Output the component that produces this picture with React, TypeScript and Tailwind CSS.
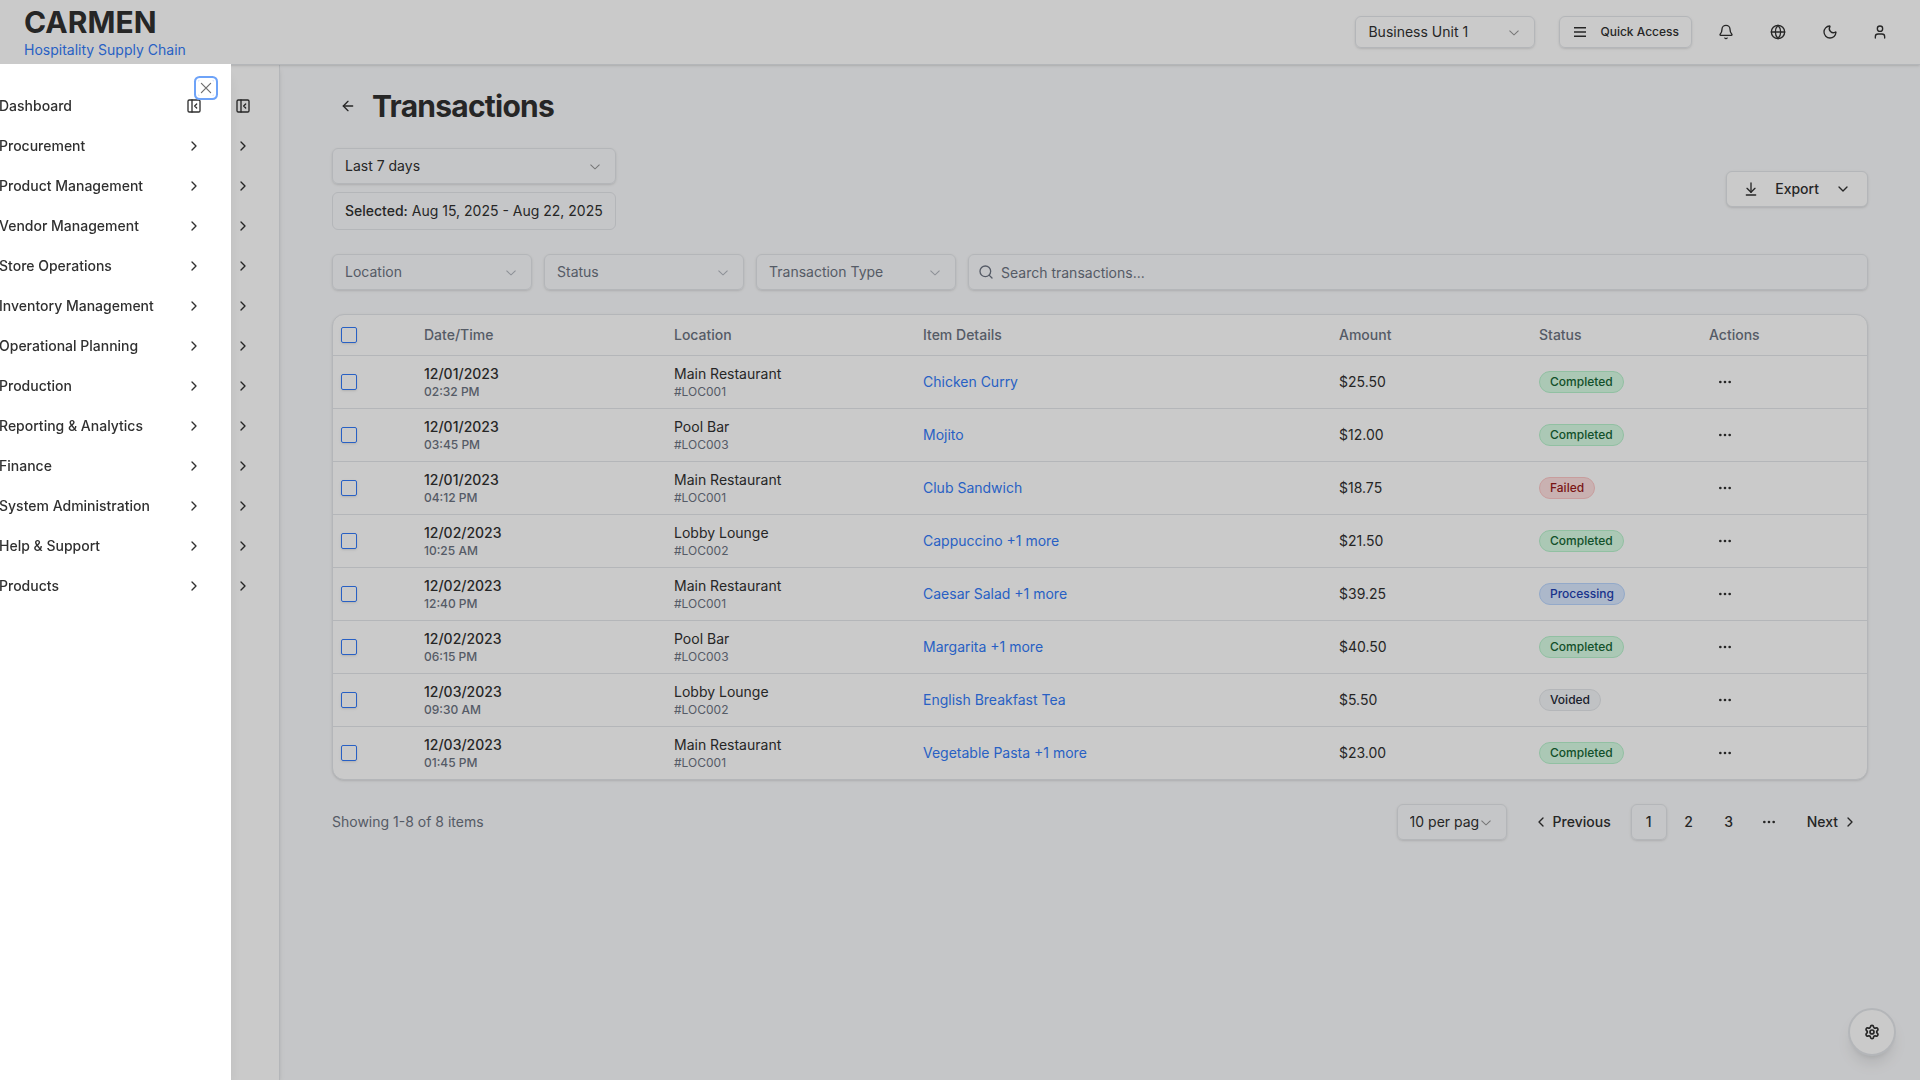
import React from "react";
import {
  ArrowLeft,
  ArrowDownToLine,
  Bell,
  ChevronDown,
  ChevronLeft,
  ChevronRight,
  Ellipsis,
  Globe,
  Moon,
  PanelLeftClose,
  Search,
  Settings,
  User,
} from "lucide-react";

const menu = [
  "Dashboard",
  "Procurement",
  "Product Management",
  "Vendor Management",
  "Store Operations",
  "Inventory Management",
  "Operational Planning",
  "Production",
  "Reporting & Analytics",
  "Finance",
  "System Administration",
  "Help & Support",
  "Products",
];

type Status = "Completed" | "Failed" | "Processing" | "Voided";

const badgeColors: Record<Status, string> = {
  Completed: "bg-[#d6fae3] border-[#b6f0cb] text-[#166534]",
  Failed: "bg-[#fcdede] border-[#fac5c5] text-[#991b1b]",
  Processing: "bg-[#d7e6fd] border-[#b8d4fc] text-[#1e40af]",
  Voided: "bg-[#f1f3f5] border-[#e1e4e8] text-[#1f2937]",
};

const rows: [string, string, string, string, string, string, Status][] = [
  ["12/01/2023", "02:32 PM", "Main Restaurant", "#LOC001", "Chicken Curry", "$25.50", "Completed"],
  ["12/01/2023", "03:45 PM", "Pool Bar", "#LOC003", "Mojito", "$12.00", "Completed"],
  ["12/01/2023", "04:12 PM", "Main Restaurant", "#LOC001", "Club Sandwich", "$18.75", "Failed"],
  ["12/02/2023", "10:25 AM", "Lobby Lounge", "#LOC002", "Cappuccino +1 more", "$21.50", "Completed"],
  ["12/02/2023", "12:40 PM", "Main Restaurant", "#LOC001", "Caesar Salad +1 more", "$39.25", "Processing"],
  ["12/02/2023", "06:15 PM", "Pool Bar", "#LOC003", "Margarita +1 more", "$40.50", "Completed"],
  ["12/03/2023", "09:30 AM", "Lobby Lounge", "#LOC002", "English Breakfast Tea", "$5.50", "Voided"],
  ["12/03/2023", "01:45 PM", "Main Restaurant", "#LOC001", "Vegetable Pasta +1 more", "$23.00", "Completed"],
];

function ThinChevron() {
  return (
    <svg viewBox="0 0 15 15" fill="currentColor" className="pointer-events-none absolute top-1/2 right-[13px] size-4 -translate-y-1/2 opacity-50" aria-hidden="true">
      <path d="M3.13523 6.15803C3.3241 5.95657 3.64052 5.94637 3.84197 6.13523L7.5 9.56464L11.158 6.13523C11.3595 5.94637 11.6759 5.95657 11.8648 6.15803C12.0536 6.35949 12.0434 6.67591 11.842 6.86477L7.84197 10.6148C7.64964 10.7951 7.35036 10.7951 7.15803 10.6148L3.15803 6.86477C2.95657 6.67591 2.94637 6.35949 3.13523 6.15803Z" />
    </svg>
  );
}

function Select({ label, value, className, height = "h-9" }: { label: string; value: string; className: string; height?: string }) {
  return (
    <div className={`relative ${className}`}>
      <select
        aria-label={label}
        className={`block w-full ${height} appearance-none rounded-md border border-[#e1e4e8] bg-transparent pl-3 pr-3 text-sm shadow-sm`}
      >
        <option>{value}</option>
      </select>
      <ThinChevron />
    </div>
  );
}

function Check({ label }: { label: string }) {
  return (
    <input
      type="checkbox"
      aria-label={label}
      className="block size-4 appearance-none rounded-xs border border-[#3279f6] shadow-sm checked:bg-[#3279f6]"
    />
  );
}

function MenuRow({ label, showLabel }: { label: string; showLabel: boolean }) {
  const Icon = label === "Dashboard" ? PanelLeftClose : ChevronRight;
  return (
    <li>
      <button
        aria-label={label}
        className={`flex h-10 w-full items-center text-left text-sm font-medium ${showLabel ? "justify-between" : "justify-end"}`}
      >
        {showLabel && <span>{label}</span>}
        <Icon className="size-4" />
      </button>
    </li>
  );
}

export default function App() {
  return (
    <div className="flex min-h-screen flex-col bg-[#f7f8fa] font-['Inter',sans-serif] text-[#303030] antialiased">
      <header className="relative z-10 box-content flex h-16 items-center justify-between border-b border-[#e1e4e8] bg-[#fdfdfd] pl-6 pr-6 shadow-sm">
        <div>
          <div className="text-3xl font-bold">CARMEN</div>
          <div className="text-sm text-[#3279f6]">Hospitality Supply Chain</div>
        </div>
        <div className="flex items-center">
          <Select label="Business unit" value="Business Unit 1" className="w-[180px]" height="h-8" />
          <button className="ml-6 flex h-8 items-center rounded-md border border-[#e1e4e8] px-3 text-xs font-medium shadow-sm">
            <svg viewBox="0 0 16 16" fill="currentColor" className="mr-3 size-4" aria-hidden="true">
              <path d="M2 3h12v1.4H2zM2 7.3h12v1.4H2zM2 11.6h12V13H2z" />
            </svg>
            Quick Access
          </button>
          <button aria-label="Notifications" className="ml-4 flex size-9 items-center justify-center"><Bell className="size-4" /></button>
          <button aria-label="Language" className="ml-4 flex size-9 items-center justify-center"><Globe className="size-4" /></button>
          <button aria-label="Theme" className="ml-4 flex size-9 items-center justify-center"><Moon className="size-4" /></button>
          <button aria-label="Account" className="ml-4 flex size-8 items-center justify-center"><User className="size-4" /></button>
        </div>
      </header>

      <div className="flex flex-1">
        <aside className="w-[280px] shrink-0 border-r border-[#e1e4e8] bg-[#fdfdfd] pr-7 pt-[21px] shadow-md">
          <ul>
            {menu.map((m) => (
              <MenuRow key={m} label={m} showLabel={false} />
            ))}
          </ul>
        </aside>

        <main className="min-w-0 flex-1 px-[52px] pt-[23px]">
          <div className="flex items-center">
            <button aria-label="Back" className="flex size-8 items-center justify-center"><ArrowLeft className="size-4" /></button>
            <h1 className="ml-2 text-3xl font-bold tracking-tight">Transactions</h1>
          </div>

          <div className="mt-6 flex items-center justify-between">
            <div className="flex flex-col gap-2">
              <Select label="Date range" value="Last 7 days" className="w-full" />
              <div className="rounded-md border border-[#e1e4e8] px-3 py-2 text-sm">
                <span className="font-medium">Selected:</span> Aug 15, 2025 - Aug 22, 2025
              </div>
            </div>
            <button className="flex h-9 items-center gap-4 rounded-md border border-[#e1e4e8] bg-[#fdfdfd] px-4 text-sm font-medium shadow-sm">
              <ArrowDownToLine className="size-4" />
              Export
              <ChevronDown className="size-4" />
            </button>
          </div>

          <div className="mt-6 flex gap-3 text-[#6b7280]">
            <Select label="Location" value="Location" className="w-[200px]" />
            <Select label="Status" value="Status" className="w-[200px]" />
            <Select label="Transaction type" value="Transaction Type" className="w-[200px]" />
            <div className="relative flex-1">
              <Search className="absolute top-1/2 left-[10px] size-4 -translate-y-1/2" />
              <input
                aria-label="Search transactions"
                placeholder="Search transactions..."
                className="block h-9 w-full rounded-md border border-[#e1e4e8] pl-8 pr-3 text-sm shadow-sm placeholder:text-[#6b7280]"
              />
            </div>
          </div>

          <div className="mt-6 overflow-hidden rounded-xl border border-[#e1e4e8] bg-[#fdfdfd] shadow">
            <table className="w-full table-fixed text-left text-sm">
              <thead className="text-[#6b7280]">
                <tr className="h-10 border-b border-[#e1e4e8]">
                  <th className="w-[83px] px-2"><Check label="Select all" /></th>
                  <th className="w-[250px] px-2 font-medium">Date/Time</th>
                  <th className="w-[249px] px-2 font-medium">Location</th>
                  <th className="w-[416px] px-2 font-medium">Item Details</th>
                  <th className="w-[200px] px-2 font-medium">Amount</th>
                  <th className="w-[170px] px-2 font-medium">Status</th>
                  <th className="w-[166px] px-2 font-medium">Actions</th>
                </tr>
              </thead>
              <tbody>
                {rows.map(([date, time, place, code, item, amount, status]) => (
                  <tr key={date + time} className="border-b border-[#e1e4e8] last:border-b-0">
                    <td className="p-2"><Check label={`Select ${item}`} /></td>
                    <td className="p-2">
                      <div className="font-medium">{date}</div>
                      <div className="text-xs font-medium text-[#6b7280]">{time}</div>
                    </td>
                    <td className="p-2">
                      <div>{place}</div>
                      <div className="text-xs text-[#6b7280]">{code}</div>
                    </td>
                    <td className="p-2"><a href="#" className="text-[#3279f6]">{item}</a></td>
                    <td className="p-2">{amount}</td>
                    <td className="p-2">
                      <span className={`inline-block rounded-full border px-[10px] py-[2px] align-middle text-xs font-medium ${badgeColors[status]}`}>{status}</span>
                    </td>
                    <td className="px-2">
                      <button aria-label={`Actions for ${item}`} className="flex size-8 items-center justify-center"><Ellipsis className="size-4" /></button>
                    </td>
                  </tr>
                ))}
              </tbody>
            </table>
          </div>

          <div className="mt-6 flex items-center justify-between text-sm">
            <p className="text-[#6b7280]">Showing 1-8 of 8 items</p>
            <div className="flex items-center gap-4">
              <div className="relative w-[110px]">
                <button aria-haspopup="listbox" className="flex h-9 w-full items-center rounded-md border border-[#e1e4e8] px-3 shadow-sm">
                  <span className="w-[70px] overflow-hidden whitespace-nowrap text-left">10 per pag</span>
                </button>
                <ThinChevron />
              </div>
              <nav aria-label="Pagination" className="flex items-center gap-1 font-medium">
                <a href="#" className="flex h-9 items-center gap-1 pl-[10px] pr-4"><ChevronLeft className="size-4" />Previous</a>
                <a href="#" className="flex size-9 items-center justify-center rounded-md border border-[#e1e4e8] shadow-sm">1</a>
                <a href="#" className="flex size-9 items-center justify-center">2</a>
                <a href="#" className="flex size-9 items-center justify-center">3</a>
                <span className="flex size-9 items-center justify-center"><Ellipsis className="size-4" /></span>
                <a href="#" className="flex h-9 items-center gap-1 pl-4 pr-[10px]">Next<ChevronRight className="size-4" /></a>
              </nav>
            </div>
          </div>
        </main>
      </div>

      <button aria-label="Settings" className="fixed right-6 bottom-6 z-10 flex size-12 items-center justify-center rounded-full border-2 border-[#e1e4e8] bg-[#fdfdfd] shadow-lg">
        <Settings className="size-4" strokeWidth={2.5} />
      </button>

      <div className="fixed inset-0 z-20 bg-black/20" aria-hidden="true" />

      <div role="dialog" aria-label="Menu" className="fixed top-16 bottom-0 left-0 z-30 w-[231px] bg-white pr-[29px] pt-[22px] shadow-lg">
        <ul className="-ml-px">
          {menu.map((m) => (
            <MenuRow key={m} label={m} showLabel />
          ))}
        </ul>
        <button aria-label="Close" className="absolute top-4 right-[17px] rounded-xs ring-2 ring-[#6ea3f8] ring-offset-2">
          <svg viewBox="0 0 16 16" stroke="currentColor" strokeWidth="1.2" strokeLinecap="round" className="size-4 opacity-70" aria-hidden="true">
            <path d="M3.4 3.4l9.2 9.2M12.6 3.4l-9.2 9.2" />
          </svg>
        </button>
      </div>
    </div>
  );
}
